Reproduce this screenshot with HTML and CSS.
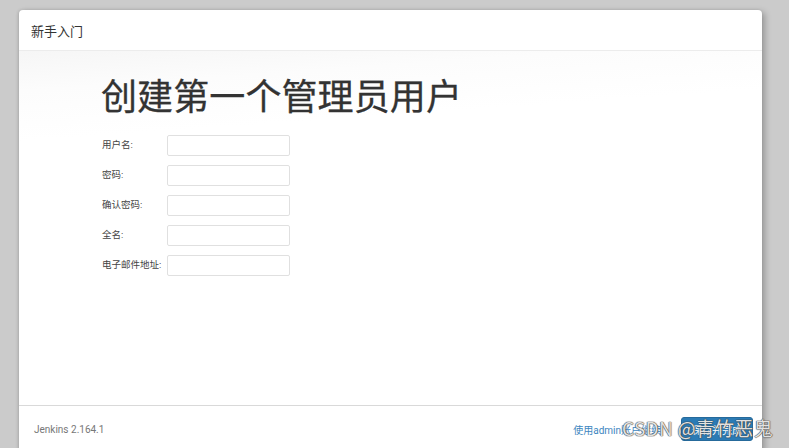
FILE: index.html
```html
<!DOCTYPE html>
<html lang="zh-CN">
<head>
<meta charset="utf-8">
<title>新手入门</title>
<link rel="stylesheet" href="styles.css">
</head>
<body>
<div class="page">
  <div class="modal">
    <div class="modal-header">新手入门</div>
    <div class="modal-body">
      <h1 class="title">创建第一个管理员用户</h1>
      <div class="form">
        <label class="lbl">用户名:</label><input class="field" type="text">
        <label class="lbl">密码:</label><input class="field" type="password">
        <label class="lbl">确认密码:</label><input class="field" type="password">
        <label class="lbl">全名:</label><input class="field" type="text">
        <label class="lbl">电子邮件地址:</label><input class="field" type="text">
      </div>
    </div>
    <div class="modal-footer">
      <span class="version">Jenkins 2.164.1</span>
      <div class="actions">
        <a class="link" href="#">使用admin账户继续</a>
        <button class="btn" type="button">保存并完成</button>
      </div>
    </div>
  </div>
  <div class="watermark">CSDN @青竹恶鬼</div>
</div>
</body>
</html>
```
FILE: styles.css
```css
html, body {
  margin: 0;
  padding: 0;
  height: 100%;
  overflow: hidden;
}
body {
  background: #cbcbcb;
  font-family: Roboto, "Noto Sans CJK SC", sans-serif;
  color: #333;
}
.page {
  position: relative;
  height: 448px;
  padding: 10px 0 0 19px;
  box-sizing: border-box;
}
.modal {
  width: 743px;
  height: 443px;
  background: #fff;
  border-radius: 4px;
  box-shadow: 3px 2px 6px rgba(0,0,0,0.25), -1px 0 3px rgba(0,0,0,0.12);
  display: flex;
  flex-direction: column;
  overflow: hidden;
}
.modal-header {
  height: 41px;
  box-sizing: border-box;
  padding: 0 12px;
  display: flex;
  align-items: center;
  font-size: 13px;
  color: #333;
  border-bottom: 1px solid #ececec;
}
.modal-body {
  flex: 1;
  padding: 27px 0 0 82px;
  background: linear-gradient(176deg, #f6f6f6 0px, #fcfcfc 40px, #fff 90px);
}
.title {
  margin: 0 0 17px 0;
  font-size: 36px;
  line-height: 40px;
  font-weight: 400;
  color: #333;
  letter-spacing: 0.1px;
  -webkit-text-stroke: 0.3px #333;
}
.form {
  display: grid;
  grid-template-columns: 65px 123px;
  row-gap: 9px;
  padding-left: 1px;
  align-items: center;
}
.lbl {
  font-size: 9.5px;
  color: #444;
  white-space: nowrap;
  padding-bottom: 4px;
}
.field {
  height: 21px;
  box-sizing: border-box;
  border: 1px solid #e0e0e0;
  border-radius: 2px;
  margin: 0;
  padding: 2px 4px;
  background: #fff;
}
.modal-footer {
  height: 48px;
  box-sizing: border-box;
  border-top: 1px solid #d9d9d9;
  padding: 11px 9px 12px 15px;
  display: flex;
  align-items: center;
  justify-content: space-between;
}
.version {
  font-size: 10px;
  color: #777;
}
.actions {
  display: flex;
  align-items: center;
  gap: 20px;
}
.link {
  font-size: 10px;
  color: #3d86c0;
  text-decoration: none;
}
.btn {
  width: 72px;
  height: 24px;
  border: 1px solid #266a9b;
  border-radius: 3px;
  background: #2b7bb5;
  color: #fff;
  font-family: Roboto, "Noto Sans CJK SC", sans-serif;
  font-size: 10px;
  padding: 0;
}
.watermark {
  position: absolute;
  left: 622px;
  top: 415px;
  font-family: "Noto Sans CJK SC", sans-serif;
  font-size: 19px;
  line-height: 26px;
  color: rgba(255,255,255,0.85);
  text-shadow: 0 0 1px #444, 0 0 1px #444, 0 0 1px #444;
  white-space: nowrap;
  letter-spacing: 0.3px;
}
```
